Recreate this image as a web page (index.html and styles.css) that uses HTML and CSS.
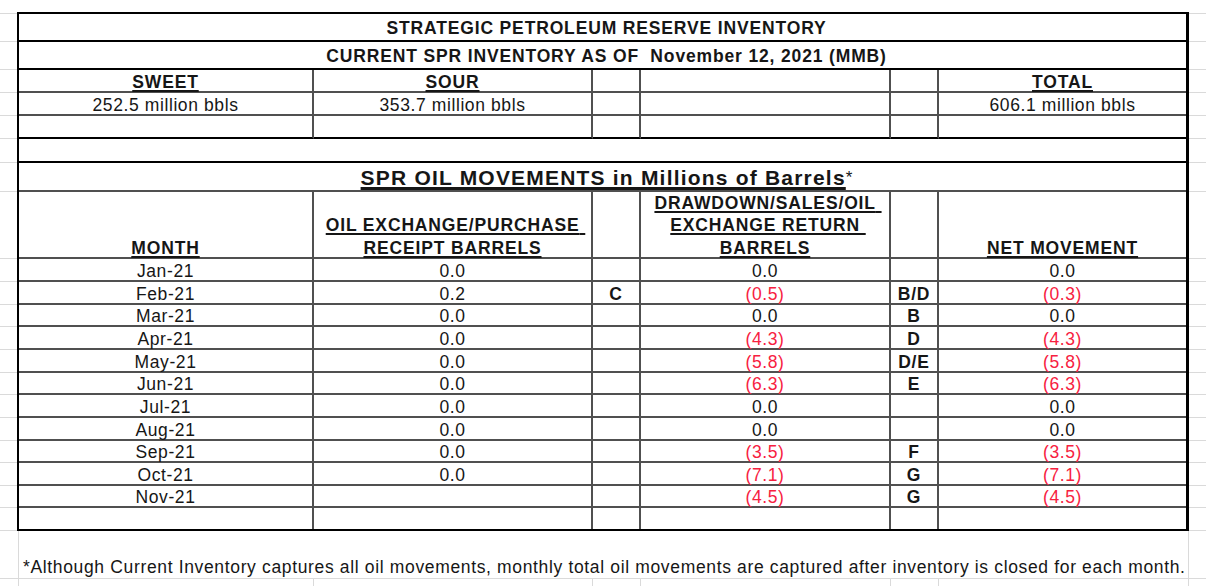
FILE: index.html
```html
<!DOCTYPE html>
<html lang="en">
<head>
<meta charset="utf-8">
<title>Strategic Petroleum Reserve Inventory</title>
<link rel="stylesheet" href="styles.css">
</head>
<body>
<div class="sheet">
  <div class="gutter">
    <div></div><div></div><div></div><div></div><div></div><div></div><div></div>
    <div></div><div></div><div></div><div></div><div></div><div></div><div></div>
    <div></div><div></div><div></div><div></div><div></div><div></div><div></div>
  </div>

  <div class="report">
    <div class="c full k mid b">STRATEGIC PETROLEUM RESERVE INVENTORY</div>
    <div class="c full k mid b">CURRENT SPR INVENTORY AS OF&nbsp; November 12, 2021 (MMB)</div>

    <div class="c b"><span class="u">SWEET</span></div>
    <div class="c b"><span class="u">SOUR</span></div>
    <div class="c"></div>
    <div class="c"></div>
    <div class="c"></div>
    <div class="c e b"><span class="u">TOTAL</span></div>

    <div class="c">252.5 million bbls</div>
    <div class="c">353.7 million bbls</div>
    <div class="c"></div>
    <div class="c"></div>
    <div class="c"></div>
    <div class="c e">606.1 million bbls</div>

    <div class="c k"></div>
    <div class="c k"></div>
    <div class="c k"></div>
    <div class="c k"></div>
    <div class="c k"></div>
    <div class="c e k"></div>

    <div class="c full k"></div>

    <div class="c full heading"><span class="u b">SPR OIL MOVEMENTS in Millions of Barrels</span><span class="star">*</span></div>

    <div class="c b"><span class="u">MONTH</span></div>
    <div class="c b"><div class="hd"><span class="u">OIL EXCHANGE/PURCHASE<span class="tail">&nbsp;</span></span><br><span class="u">RECEIPT BARRELS</span></div></div>
    <div class="c"></div>
    <div class="c b"><div class="hd"><span class="u">DRAWDOWN/SALES/OIL<span class="tail">&nbsp;</span></span><br><span class="u">EXCHANGE RETURN<span class="tail">&nbsp;</span></span><br><span class="u">BARRELS</span></div></div>
    <div class="c"></div>
    <div class="c e b"><span class="u">NET MOVEMENT</span></div>

    <div class="c">Jan-21</div><div class="c">0.0</div><div class="c b"></div><div class="c">0.0</div><div class="c b"></div><div class="c e">0.0</div>
    <div class="c">Feb-21</div><div class="c">0.2</div><div class="c b">C</div><div class="c neg">(0.5)</div><div class="c b">B/D</div><div class="c e neg">(0.3)</div>
    <div class="c">Mar-21</div><div class="c">0.0</div><div class="c b"></div><div class="c">0.0</div><div class="c b">B</div><div class="c e">0.0</div>
    <div class="c">Apr-21</div><div class="c">0.0</div><div class="c b"></div><div class="c neg">(4.3)</div><div class="c b">D</div><div class="c e neg">(4.3)</div>
    <div class="c">May-21</div><div class="c">0.0</div><div class="c b"></div><div class="c neg">(5.8)</div><div class="c b">D/E</div><div class="c e neg">(5.8)</div>
    <div class="c">Jun-21</div><div class="c">0.0</div><div class="c b"></div><div class="c neg">(6.3)</div><div class="c b">E</div><div class="c e neg">(6.3)</div>
    <div class="c">Jul-21</div><div class="c">0.0</div><div class="c b"></div><div class="c">0.0</div><div class="c b"></div><div class="c e">0.0</div>
    <div class="c">Aug-21</div><div class="c">0.0</div><div class="c b"></div><div class="c">0.0</div><div class="c b"></div><div class="c e">0.0</div>
    <div class="c">Sep-21</div><div class="c">0.0</div><div class="c b"></div><div class="c neg">(3.5)</div><div class="c b">F</div><div class="c e neg">(3.5)</div>
    <div class="c">Oct-21</div><div class="c">0.0</div><div class="c b"></div><div class="c neg">(7.1)</div><div class="c b">G</div><div class="c e neg">(7.1)</div>
    <div class="c">Nov-21</div><div class="c"></div><div class="c b"></div><div class="c neg">(4.5)</div><div class="c b">G</div><div class="c e neg">(4.5)</div>
    <div class="c z"></div><div class="c z"></div><div class="c z"></div><div class="c z"></div><div class="c z"></div><div class="c e z"></div>
  </div>

  <div class="gutter">
    <div></div><div></div><div></div><div></div><div></div><div></div><div></div>
    <div></div><div></div><div></div><div></div><div></div><div></div><div></div>
    <div></div><div></div><div></div><div></div><div></div><div></div><div></div>
  </div>
</div>

<div class="below">
  <div class="bg"></div>
  <div class="note">*Although Current Inventory captures all oil movements, monthly total oil movements are captured after inventory is closed for each month.</div>
  <div class="bg edge"></div>

  <div class="bg low"></div>
  <div class="bc"></div><div class="bc"></div><div class="bc"></div><div class="bc"></div><div class="bc"></div><div class="bc"></div>
  <div class="bg low edge"></div>
</div>
</body>
</html>
```

FILE: styles.css
```css
* { box-sizing: border-box; }

html, body {
  margin: 0;
  height: 100%;
}

body {
  background: #fff;
  color: #161616;
  font-family: "Liberation Sans", Arial, sans-serif;
  font-size: 17.5px;
  letter-spacing: 0.6px;
  overflow: hidden;
}

/* spreadsheet frame: gutters + bordered report */
.sheet {
  display: grid;
  grid-template-columns: 17px 1172px 17px;
  align-items: start;
}

.gutter {
  display: grid;
  grid-template-rows: 14px 28px 28px 23px 23px 23px 24px 29px 67px
                      23px 23px 22px 23px 23px 22px 23px 23px 22px 23px 22px 23px;
}

.gutter > div {
  border-bottom: 1px solid #dadada;
}

.report {
  margin-top: 12px;
  border: 2px solid #000;
  border-right-width: 3px;
  display: grid;
  grid-template-columns: 295px 279px 48px 250px 48px 1fr;
  grid-template-rows: 28px 28px 23px 23px 23px 24px 29px 67px
                      23px 23px 22px 23px 23px 22px 23px 23px 22px 23px 22px 21px;
}

.c {
  display: flex;
  align-items: flex-end;
  justify-content: center;
  border-right: 2px solid #505050;
  border-bottom: 2px solid #505050;
  line-height: 18px;
  white-space: nowrap;
}

.c.e { border-right: 0; }
.c.full { grid-column: 1 / -1; border-right: 0; }
.c.k { border-bottom-color: #000; }
.c.z { border-bottom: 0; }
.c.mid { align-items: center; padding: 1px 0 0 8px; line-height: 20px; }

.b { font-weight: bold; letter-spacing: 0.85px; }

.u {
  text-decoration: underline;
  text-decoration-thickness: 2px;
  text-underline-offset: 2px;
}

.tail { margin-right: -6px; }

.neg { color: #f7213f; }

.heading {
  font-size: 21px;
  letter-spacing: 1.2px;
  line-height: 24px;
  padding-left: 8px;
}

.heading .b { letter-spacing: 1.2px; }
.heading .u { text-decoration-thickness: 2.5px; }

.star {
  font-size: 17px;
  letter-spacing: 0;
  align-self: flex-start;
  padding-top: 3px;
}

.hd {
  text-align: center;
  line-height: 22.5px;
  margin-bottom: -2px;
}

/* area under the report */
.below {
  display: grid;
  grid-template-columns: 18px 295px 279px 48px 250px 48px 250px 1fr;
  grid-template-rows: 48px 7px;
}

.bg { border-bottom: 1px solid #dadada; }
.bg.low { border-bottom: 0; }
.bg.edge { border-left: 1px solid #dadada; }

.note {
  grid-column: 2 / 8;
  border-left: 1px solid #dadada;
  border-bottom: 1px solid #dadada;
  display: flex;
  align-items: flex-end;
  padding: 0 0 1px 4px;
  line-height: 20px;
  letter-spacing: 0.65px;
  white-space: nowrap;
}

.bc { border-left: 1px solid #dadada; }
```
